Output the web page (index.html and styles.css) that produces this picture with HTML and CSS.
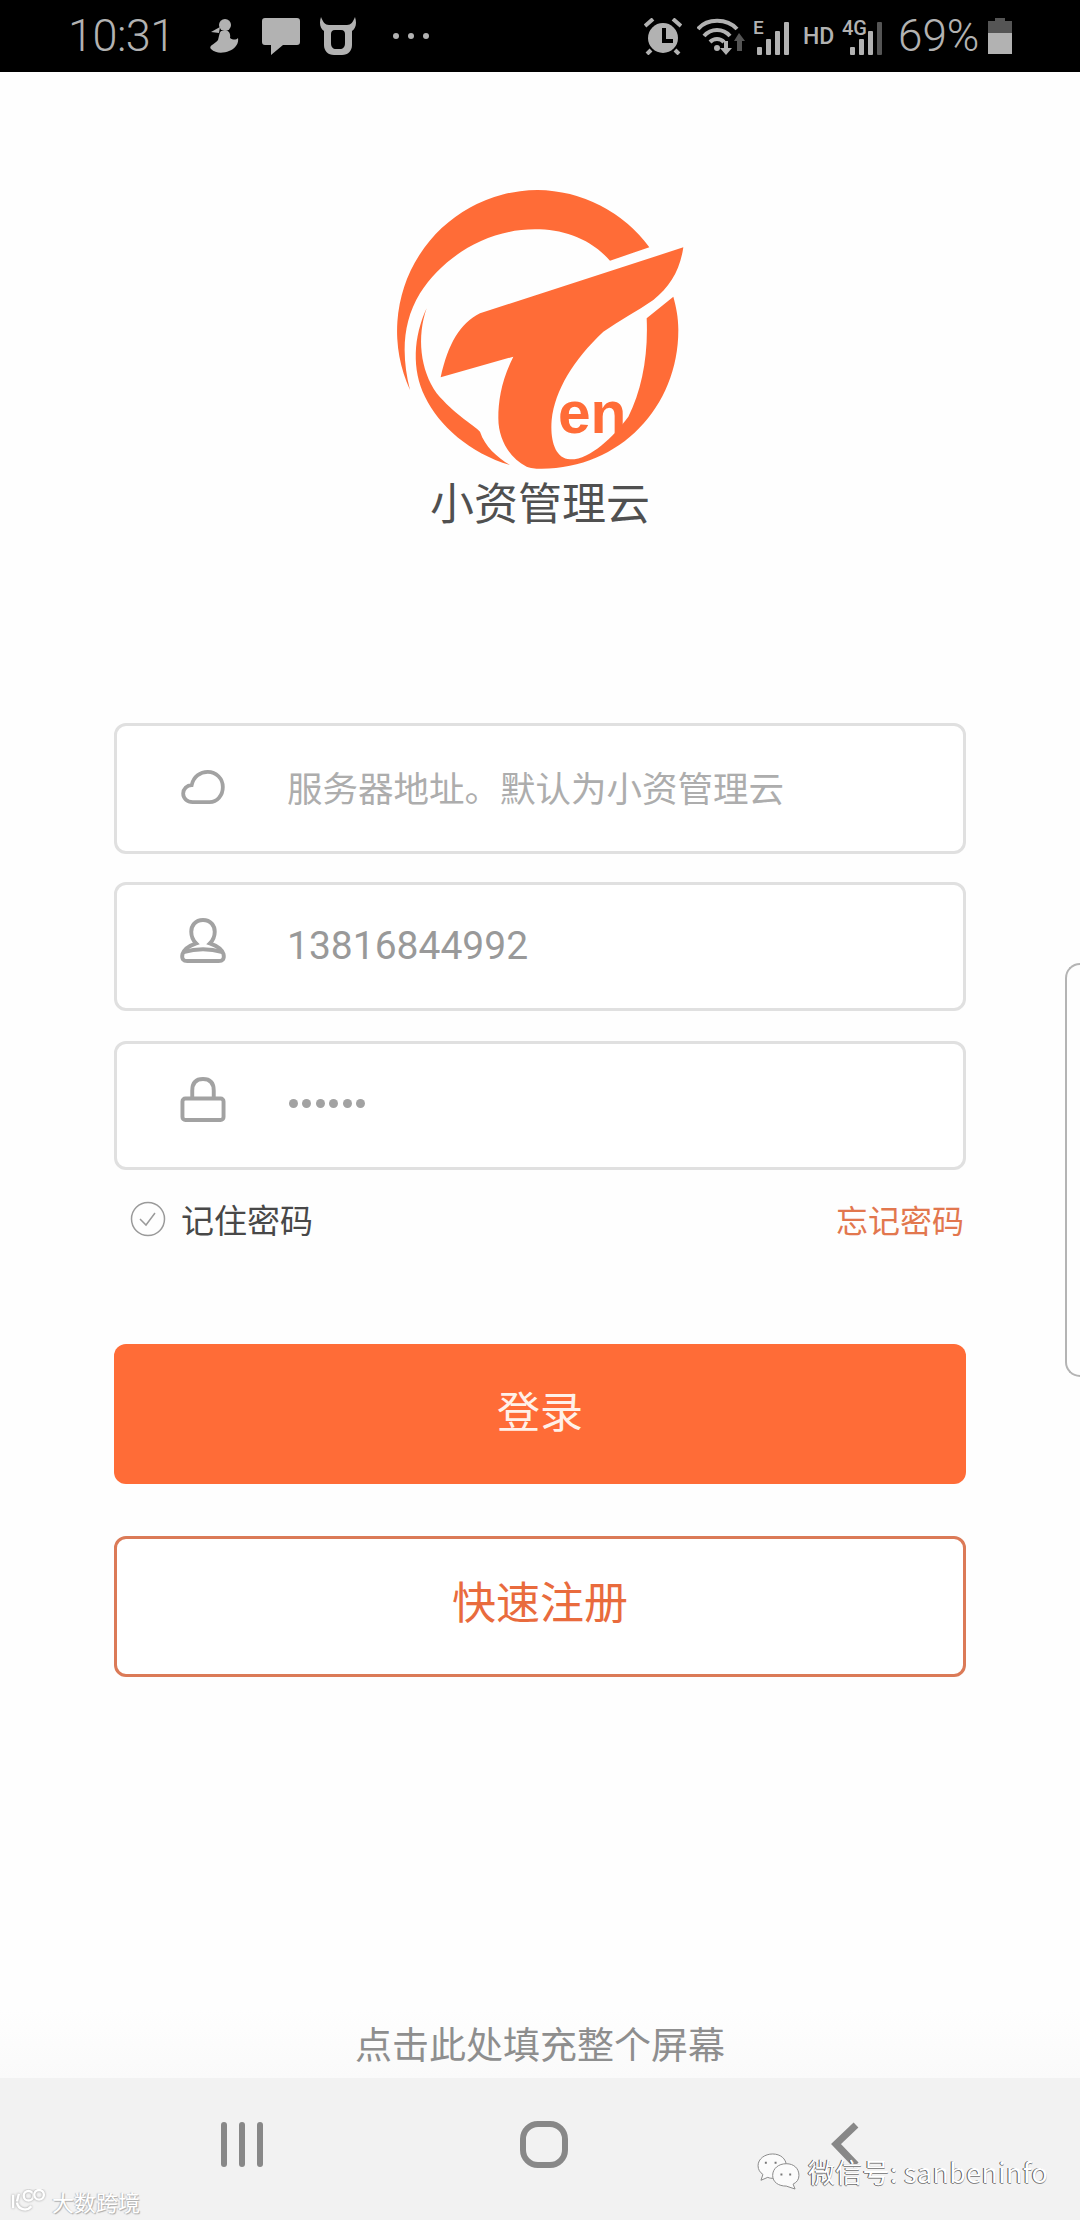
FILE: index.html
```html
<!DOCTYPE html>
<html lang="zh-CN">
<head>
<meta charset="utf-8">
<title>小资管理云</title>
<link rel="stylesheet" href="styles.css">
</head>
<body>
<div class="page">
  <header class="status">
    <div class="status-left">
      <span class="time">10:31</span>
      <svg class="ic ic-run" viewBox="0 0 30 36"><circle cx="16" cy="7" r="6"/><path d="M11 9 L2 14 L10 15Z"/><path d="M12 13 C19 11 22 14 21 20 C24 22 27 22 29 20 C30 26 26 31 20 33 C15 35 7 36 2 31 C-1 28 6 26 9 22 C10 19 10 15 12 13Z"/></svg>
      <svg class="ic ic-msg" viewBox="0 0 38 37"><path d="M3 0H35Q38 0 38 3V24Q38 27 35 27H21L9 37V27H3Q0 27 0 24V3Q0 0 3 0Z"/></svg>
      <svg class="ic ic-cow" viewBox="0 0 36 38"><path fill-rule="evenodd" d="M1 0 C3 5 5 8 9 8 H27 C31 8 33 5 35 0 C37 6 36 11 32 14 V28 C32 34 28 38 22 38 H14 C8 38 4 34 4 28 V14 C0 11 -1 6 1 0Z M15 13 C12 13 11 15 11 17 V26 C11 30 13 32 16 32 H20 C23 32 25 30 25 26 V17 C25 15 24 13 21 13Z"/></svg>
      <span class="dots"><i></i><i></i><i></i></span>
    </div>
    <div class="status-right">
      <svg class="ic ic-alarm" viewBox="0 0 38 37"><circle cx="19" cy="20" r="15"/><path d="M18 10H22V21H29V25H18Z" fill="#000"/><path d="M1 8L9 1M37 8L29 1M7 32L3 36M31 32L35 36" class="alarm-lines"/></svg>
      <svg class="ic ic-wifi" viewBox="0 0 48 37"><path class="wifi-arc" d="M1 11 C10 0 30 0 40 11M7 18 C14 10 26 10 33 18M13 24 C17 20 23 20 27 24"/><circle cx="20" cy="30" r="3"/><path d="M27 23H31V30H35L29 37L23 30H27Z"/><path class="dim" d="M42 15L48 23H45V33H40V23H37Z"/></svg>
      <div class="sig sig-e">
        <span class="sig-letter">E</span>
        <svg class="ic ic-bars" viewBox="0 0 32 33"><rect x="0" y="25" width="5" height="8" rx="1"/><rect x="9" y="17" width="5" height="16" rx="1"/><rect x="18" y="9" width="5" height="24" rx="1"/><rect x="27" y="0" width="5" height="33" rx="1"/></svg>
      </div>
      <span class="hd">HD</span>
      <div class="sig sig-4g">
        <span class="sig-letter">4G</span>
        <svg class="ic ic-bars" viewBox="0 0 32 33"><rect x="0" y="25" width="5" height="8" rx="1"/><rect x="9" y="17" width="5" height="16" rx="1"/><rect x="18" y="9" width="5" height="24" rx="1"/><rect class="dim" x="27" y="0" width="5" height="33" rx="1"/></svg>
      </div>
      <span class="pct">69%</span>
      <svg class="ic ic-batt" viewBox="0 0 24 36"><path class="dim" d="M7 0H17V3H24V15H0V3H7Z"/><rect y="15" width="24" height="21"/></svg>
    </div>
  </header>

  <main class="main">
    <svg class="logo" viewBox="0 0 1020 900" role="img" aria-label="Ten">
      <path d="M120 660A423 423 0 0 1 503 60A423 423 0 0 1 838 232L720 272C660 205 580 178 495 178C350 178 220 260 150 370C95 460 95 560 120 660Z"/>
      <path d="M170 415C130 500 125 600 165 680C205 765 300 850 420 885C380 860 345 830 330 785C310 765 250 730 200 670C150 600 140 500 170 415Z"/>
      <path d="M940 232L330 430C270 460 235 520 212 622L430 560C395 630 385 690 385 745C385 810 420 865 470 890C490 896 500 896 515 896C750 896 925 710 925 480C925 440 918 410 910 380L830 445C835 560 815 660 775 740C730 800 660 870 600 868C555 865 540 810 545 750C555 660 610 570 700 485C750 450 800 425 850 390C900 350 930 300 940 232Z"/>
      <text class="logo-text" x="564" y="788">en</text>
    </svg>
    <h1 class="title">小资管理云</h1>

    <form class="form">
      <div class="field field-first">
        <svg class="field-ic field-ic-cloud" viewBox="0 0 46 36"><path d="M12 34C6 34 2 30 2 25C2 20 6 16 11 16C13 7 20 2 28 2C37 2 44 9 44 18C44 27 38 34 30 34Z"/></svg>
        <span class="field-text placeholder">服务器地址。默认为小资管理云</span>
      </div>
      <div class="field">
        <svg class="field-ic field-ic-tall" viewBox="0 0 46 46"><path d="M23 2C15 2 11 8 11 14C11 19 13 23 16 26C10 28 4 31 2 37C1 42 3 44 7 44H39C43 44 45 42 44 37C42 31 36 28 30 26C33 23 35 19 35 14C35 8 31 2 23 2Z"/><path d="M3 35C16 31 30 31 43 35"/></svg>
        <span class="field-text value">13816844992</span>
      </div>
      <div class="field">
        <svg class="field-ic field-ic-tall" viewBox="0 0 46 46"><rect x="2" y="22" width="42" height="22" rx="3"/><path d="M12 22V14C12 6 16 2 23 2C30 2 34 6 34 14V22"/></svg>
        <span class="pw"><i></i><i></i><i></i><i></i><i></i><i></i></span>
      </div>
    </form>

    <div class="options">
      <span class="remember">
        <svg class="check" viewBox="0 0 36 36"><circle cx="18" cy="18" r="16.5"/><path d="M10 18L16 24L25 12"/></svg>
        记住密码
      </span>
      <span class="forgot">忘记密码</span>
    </div>

    <button class="btn btn-primary" type="button">登录</button>
    <button class="btn btn-outline" type="button">快速注册</button>
  </main>

  <div class="hint">点击此处填充整个屏幕</div>

  <nav class="nav">
    <span class="nav-item"><span class="recents"><i></i><i></i><i></i></span></span>
    <span class="nav-item"><span class="home"></span></span>
    <span class="nav-item"><svg class="back" viewBox="0 0 30 48"><path d="M25 4L5 23L25 44"/></svg></span>
  </nav>

  <div class="edge-panel"></div>

  <div class="wm wm-left">
    <svg class="wm-logo" viewBox="0 0 38 26"><path class="wm-stroke" d="M3 6V20M7 14C8 21 17 24 22 18M9 5L7 13"/><circle class="wm-stroke" cx="19" cy="7" r="5"/><circle class="wm-stroke" cx="30" cy="6" r="5"/></svg>
    <span class="wm-text wm-text-left">大数跨境</span>
  </div>
  <div class="wm wm-right">
    <svg class="wm-chat" viewBox="0 0 44 38"><path d="M16 1C8 1 1 6 1 13C1 17 3 20 6 22L4 28L11 25C13 26 15 26 17 26H27C29 24 30 21 30 13C30 6 24 1 16 1Z"/><path d="M30 11C22 11 16 16 16 23C16 30 22 34 30 34L39 37L37 32C41 30 43 27 43 23C43 16 38 11 30 11Z"/><path class="eye" d="M9 9v2M19 9v2M25 21v2M34 21v2"/></svg>
    <span class="wm-text wm-text-right">微信号: sanbeninfo</span>
  </div>
</div>
</body>
</html>
```
FILE: styles.css
```css
* { box-sizing: border-box; }
html, body { margin: 0; padding: 0; }
body { font-family: "Noto Sans CJK SC", "Noto Sans", sans-serif; background: #fff; }
.page { position: relative; width: 1080px; height: 2220px; overflow: hidden; display: flex; flex-direction: column; background: #fefefe; }

/* status bar */
.status { height: 72px; flex: none; background: #000; color: #b2b2b2; display: flex; justify-content: space-between; align-items: center; padding: 0 68px; }
.status-left, .status-right { display: flex; align-items: center; }
.ic { display: block; fill: #b2b2b2; flex: none; }
.ic .dim, .dim { fill: #555; }
.time { font-family: Roboto, sans-serif; font-weight: 300; font-size: 45px; line-height: 72px; letter-spacing: -0.5px; }
.ic-run { width: 30px; height: 36px; margin-left: 34px; }
.ic-msg { width: 38px; height: 37px; margin-left: 23px; }
.ic-cow { width: 36px; height: 38px; margin-left: 20px; }
.dots { display: flex; gap: 9px; margin-left: 37px; }
.dots i { width: 6px; height: 6px; border-radius: 50%; background: #b2b2b2; }
.ic-alarm { width: 38px; height: 37px; }
.alarm-lines { stroke: #b2b2b2; stroke-width: 4; fill: none; }
.ic-wifi { width: 48px; height: 37px; margin-left: 15px; }
.wifi-arc { fill: none; stroke: #b2b2b2; stroke-width: 4; }
.sig { position: relative; height: 37px; padding-top: 4px; }
.sig-letter { position: absolute; left: 0; top: -1px; font-family: Roboto, sans-serif; font-weight: 500; line-height: 22px; font-size: 19px; }
.sig-e { width: 36px; margin-left: 8px; padding-left: 4px; }
.ic-bars { width: 32px; height: 33px; }
.hd { font-family: Roboto, sans-serif; font-weight: 500; font-size: 23px; margin-left: 14px; width: 30px; white-space: nowrap; }
.sig-4g { width: 40px; margin-left: 9px; padding-left: 8px; }
.sig-4g .sig-letter { font-size: 20px; }
.pct { font-family: Roboto, sans-serif; font-weight: 300; font-size: 44px; line-height: 72px; margin-left: 16px; width: 79px; white-space: nowrap; }
.ic-batt { width: 24px; height: 36px; margin-left: 11px; }

/* main */
.main { flex: 1; display: flex; flex-direction: column; padding: 98px 114px 0; }
.logo { display: block; width: 340px; height: 300px; align-self: center; flex: none; fill: #ff6c37; }
.logo-text { font-family: "Liberation Sans", sans-serif; font-weight: 700; font-size: 176px; fill: #ff6c37; }
.title { margin: 1px 0 2px; font-weight: 400; font-size: 44px; line-height: 60px; text-align: center; color: #505050; }

.form { display: flex; flex-direction: column; gap: 30px; margin-top: 190px; }
.field { height: 129px; border: 3px solid #e0e0e0; border-radius: 12px; display: flex; align-items: center; padding-left: 63px; background: #fff; }
.field-first { height: 131px; margin-bottom: -2px; }
.field-ic { width: 46px; height: 34px; flex: none; fill: none; stroke: #a2a2a2; stroke-width: 4; overflow: visible; }
.field-ic-cloud { margin-bottom: 4px; }
.field-ic-tall { height: 45px; margin-bottom: 13px; }
.field-text { margin-left: 61px; font-size: 35.5px; line-height: 50px; white-space: nowrap; }
.placeholder { color: #adadad; margin-bottom: 4px; }
.value { font-family: Roboto, sans-serif; font-size: 39px; color: #999; margin-bottom: 2px; }
.pw { display: flex; gap: 4.4px; margin-left: 63px; margin-bottom: 4px; }
.pw i { width: 9px; height: 9px; border-radius: 50%; background: #a2a2a2; }

.options { display: flex; justify-content: space-between; align-items: center; height: 40px; margin-top: 29px; padding: 0 2px 0 16px; font-size: 33px; line-height: 40px; }
.remember { display: flex; align-items: center; color: #484848; }
.check { width: 36px; height: 36px; margin-right: 15px; fill: none; stroke: #9a9a9a; stroke-width: 1.5; }
.forgot { color: #e2774e; font-size: 32px; }

.btn { display: block; width: 100%; height: 140px; border-radius: 12px; font-family: inherit; font-size: 43px; padding: 0 0 11px; flex: none; }
.btn-primary { margin-top: 105px; background: #ff6c37; border: 0; color: #fff1e9; }
.btn-outline { margin-top: 52px; height: 141px; background: #fff; border: 3px solid #db7a57; color: #e96b3d; font-size: 44px; padding-bottom: 14px; }

/* bottom */
.hint { height: 68px; flex: none; display: flex; align-items: center; justify-content: center; padding-bottom: 3px; background: linear-gradient(#fefefe, #fafafa); color: #8e8e8e; font-size: 37px; }
.nav { height: 142px; flex: none; background: #f2f2f2; display: flex; justify-content: center; padding: 0 0 9px 8px; }
.nav-item { width: 302px; display: flex; align-items: center; justify-content: center; }
.recents { display: flex; gap: 11.5px; }
.recents i { width: 6.5px; height: 45px; border-radius: 3px; background: #888; }
.home { width: 48px; height: 47px; border: 6px solid #888; border-radius: 18px; }
.back { width: 30px; height: 48px; fill: none; stroke: #888; stroke-width: 7; }

/* overlays */
.edge-panel { position: absolute; right: 0; top: 963px; width: 15px; height: 414px; border: 2px solid #b4b4b4; border-right: 0; border-radius: 15px 0 0 15px; background: #fefefe; }
.wm { position: absolute; display: flex; align-items: center; }
.wm-left { left: 10px; top: 2188px; gap: 5px; }
.wm-logo { width: 37px; height: 25px; fill: none; flex: none; }
.wm-stroke { fill: none; stroke: #fff; stroke-width: 2.5; filter: drop-shadow(0 0 1px #999); }
.wm-right { left: 757px; top: 2151px; gap: 8px; }
.wm-chat { width: 43px; height: 37px; fill: #fbfbfb; stroke: #888; stroke-width: 1; flex: none; }
.wm-chat .eye { stroke: #777; stroke-width: 2; fill: none; }
.wm-text { color: #fff; white-space: nowrap; }
.wm-text-left { font-size: 22px; line-height: 26px; text-shadow: 1px 1px 1px #aaa, -1px 0 1px #bbb; }
.wm-text-right { font-size: 27px; line-height: 38px; margin-top: 2px; letter-spacing: 0.3px; text-shadow: -1px 0 0 #555, 0 1px 0 #888; }
```
